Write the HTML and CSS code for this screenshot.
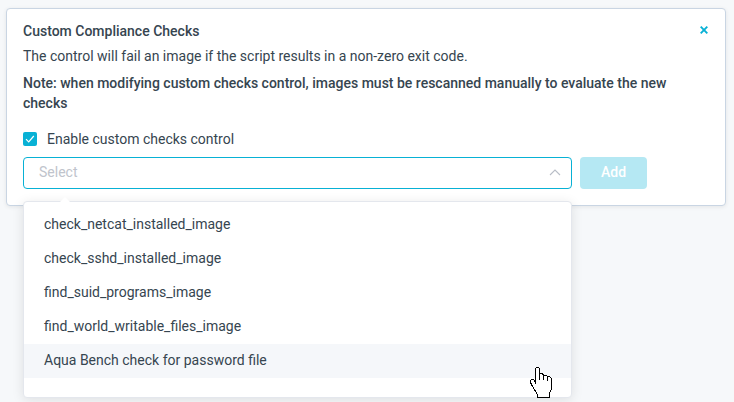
FILE: index.html
```html
<!DOCTYPE html>
<html lang="en">
<head>
<meta charset="utf-8">
<title>Custom Compliance Checks</title>
<link rel="stylesheet" href="styles.css">
</head>
<body>
<section class="card">
  <header class="card-header">
    <h1>Custom Compliance Checks</h1>
    <button class="close" aria-label="Close"><svg width="8" height="8" viewBox="0 0 8 8"><path d="M.7.7l6.600 6.600M7.300.7L.7 7.300"/></svg></button>
  </header>
  <p class="description">The control will fail an image if the script results in a non-zero exit code.</p>
  <p class="note">Note: when modifying custom checks control, images must be rescanned manually to evaluate the new checks</p>
  <label class="enable"><span class="checkbox"><svg width="14" height="14" viewBox="0 0 14 14"><path d="M3 7.200l2.700 2.700L10.800 4"/></svg></span>Enable custom checks control</label>
  <div class="controls">
    <div class="select">
      <span>Select</span>
      <svg class="chevron" width="12" height="8" viewBox="0 0 12 8"><path d="M1 7l5-5 5 5"/></svg>
      <ul class="menu">
        <li>check_netcat_installed_image</li>
        <li>check_sshd_installed_image</li>
        <li>find_suid_programs_image</li>
        <li>find_world_writable_files_image</li>
        <li class="active">Aqua Bench check for password file</li>
      </ul>
    </div>
    <button class="add">Add</button>
  </div>
</section>
<svg class="cursor" width="24" height="33" viewBox="0 0 24 33"><path d="M5.500 17.500V2.500L6.500 1.500H8.500L9.500 2.500V7.500H12.500L13.500 9.500H16.500L17.500 10.500H19.500L21.500 12.500V22.500L19.500 27.500V31.500H7.500V28.500L2.500 20.500L.5 16.500V14.500L1.500 13.500H3.500L5.500 16.500"/><path d="M9.500 7v7M13.500 9v5M17.500 11v4"/></svg>
</body>
</html>
```
FILE: styles.css
```css
* { box-sizing: border-box; }
body {
  margin: 0;
  height: 402px;
  overflow: hidden;
  padding: 8px 8px 0 6px;
  background: #f6f8fa;
  color: #364550;
  font: 14px/20px Roboto, sans-serif;
}
.card {
  height: 198px;
  padding: 12px 17px 0 16px;
  background: #fff;
  border: 1px solid #c9d5e3;
  border-radius: 4px;
  box-shadow: 0 1px 4px rgba(0, 0, 0, .08);
}
.card-header { display: flex; justify-content: space-between; height: 20px; }
h1, p { margin: 0; font-size: 14px; }
h1, .note { font-weight: 500; }
.close { display: flex; padding: 5px 0; border: 0; background: none; }
.close svg { fill: none; stroke: #08b1d5; stroke-width: 1.9; }
.description { margin-top: 5px; }
.note { margin-top: 7px; }
.enable { display: flex; align-items: center; gap: 10px; height: 20px; margin-top: 16px; }
.checkbox { width: 14px; height: 14px; border-radius: 2px; background: #08b1d5; }
.checkbox svg { display: block; fill: none; stroke: #fff; stroke-width: 1.2; }
.controls { display: flex; gap: 8px; margin-top: 8px; }
.select {
  position: relative;
  display: flex;
  align-items: center;
  justify-content: space-between;
  width: 549px;
  height: 32px;
  padding: 0 10px 2px 15px;
  border: 1px solid #08b1d5;
  border-radius: 4px;
  color: #c0c4cc;
}
.chevron { fill: none; stroke: #b8bdc7; stroke-width: 1.1; }
.add {
  width: 67px;
  height: 32px;
  padding: 0 0 2px;
  border: 0;
  border-radius: 4px;
  background: #b5e8f3;
  color: #fff;
  font: 500 14px/20px Roboto, sans-serif;
}
.menu {
  position: absolute;
  z-index: 1;
  top: 43px;
  left: -1px;
  width: 549px;
  height: 197px;
  margin: 0;
  padding: 6px 0;
  list-style: none;
  background: #fff;
  border: 1px solid #e4e7ed;
  border-radius: 4px;
  box-shadow: 0 2px 12px rgba(0, 0, 0, .1);
  color: #364550;
}
.menu::before {
  content: "";
  position: absolute;
  top: -5px;
  left: 35px;
  border: solid transparent;
  border-width: 0 6px 6px;
  border-bottom-color: #fff;
}
.menu li { height: 34px; padding: 0 20px; line-height: 32px; }
.menu .active { background: #f5f7fa; }
.cursor { position: absolute; z-index: 2; left: 530px; top: 366px; fill: #fff; stroke: #000; shape-rendering: crispEdges; }
```
